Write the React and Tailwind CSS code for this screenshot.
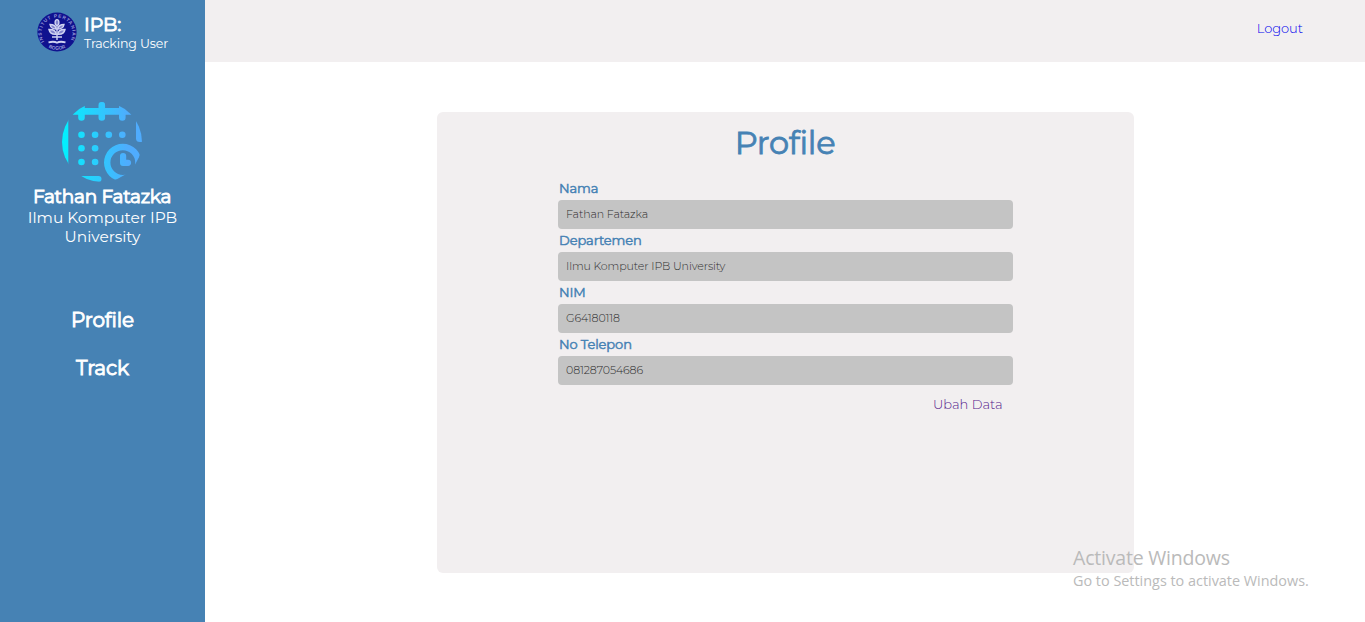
import React from "react";

const fields = [
  { label: "Nama", value: "Fathan Fatazka" },
  { label: "Departemen", value: "Ilmu Komputer IPB University" },
  { label: "NIM", value: "G64180118" },
  { label: "No Telepon", value: "081287054686" },
];

function Logo() {
  return (
    <svg viewBox="0 0 40 40" className="h-10 w-10 shrink-0">
      <defs>
        <path id="ringTop" d="M7.2 29.500 A15.400 15.400 0 1 1 32.800 29.500" />
        <path id="ringBottom" d="M8 33.200 A18.200 18.200 0 0 0 32 33.200" />
      </defs>
      <circle cx="20" cy="20" r="19.600" fill="#10128f" />
      <g fill="#9a9dda" fontFamily="Liberation Sans, sans-serif" fontWeight="700" fontSize="4.700">
        <text><textPath href="#ringTop" textLength="64">INSTITUT PERTANIAN</textPath></text>
        <text><textPath href="#ringBottom" startOffset="50%" textAnchor="middle">BOGOR</textPath></text>
      </g>
      <g fill="none" stroke="#d0d3f2" strokeWidth="1.400">
        <ellipse cx="20" cy="10.500" rx="1.900" ry="2.900" fill="#8083cc" />
        <path d="M13 12.500c3.500 0 5.700 1.300 6.200 4.500-3.500 0-5.700-1.500-6.200-4.500z" fill="#8083cc" />
        <path d="M27 12.500c-3.500 0-5.700 1.300-6.200 4.500 3.500 0 5.700-1.500 6.200-4.500z" fill="#8083cc" />
        <path d="M12 17.500c4-.2 6.700 1.300 7.200 4.700-4 .3-6.500-1.300-7.200-4.700z" fill="#8083cc" />
        <path d="M28 17.500c-4-.2-6.700 1.300-7.200 4.700 4 .3 6.500-1.300 7.200-4.700z" fill="#8083cc" />
        <path d="M20 13v15M15 25h10" />
        <path d="M11.500 30.300c3.500-.8 6.500-.8 8.500.4 2-1.200 5-1.200 8.500-.4" strokeWidth="1.800" />
      </g>
    </svg>
  );
}

function Avatar() {
  return (
    <svg viewBox="10 10 80 80" className="h-20 w-20">
      <defs>
        <linearGradient id="avatarFill" gradientUnits="userSpaceOnUse" x1="10" y1="50" x2="76" y2="50">
          <stop offset="0" stopColor="#00f2fe" />
          <stop offset="1" stopColor="#4facfe" />
        </linearGradient>
        <clipPath id="avatarClip"><circle cx="50" cy="50" r="40" /></clipPath>
      </defs>
      <g clipPath="url(#avatarClip)" fill="url(#avatarFill)">
        <path d="M5 20h11.300v60H5zM15 16h70v6.800H15zM26.200 10h6.600v15.500a3.300 3.300 0 0 1-6.600 0zM46.500 13a3.300 3.300 0 0 1 6.600 0v12.500a3.300 3.300 0 0 1-6.600 0zM67 10h6.600v15.500a3.300 3.300 0 0 1-6.600 0zM84 20h8v26.500a4 3.500 0 0 1-8 0zM15 84h31.500a3 3 0 0 1 0 6H15z" />
        <circle cx="29.500" cy="42.700" r="3.300" />
        <circle cx="43.100" cy="42.700" r="3.300" />
        <circle cx="56.800" cy="42.700" r="3.300" />
        <circle cx="70.300" cy="42.700" r="3.300" />
        <circle cx="29.500" cy="56.300" r="3.300" />
        <circle cx="43.100" cy="56.300" r="3.300" />
        <circle cx="29.500" cy="70" r="3.300" />
        <circle cx="43.100" cy="70" r="3.300" />
        <path d="M68 64a3 3 0 0 1 6.200 0v3.700h1.800a3.100 3.100 0 0 1 0 6.200h-5a3 3 0 0 1-3-3z" />
        <path fillRule="evenodd" d="M70.800 51.800a18.800 18.800 0 1 1 0 37.600a18.800 18.800 0 1 1 0-37.600zM70.800 58.200a12.400 12.400 0 1 0 0 24.800a12.400 12.400 0 1 0 0-24.800z" />
      </g>
    </svg>
  );
}

export default function App() {
  return (
    <div className="relative flex h-[622px] w-full overflow-hidden bg-white font-['Montserrat','Inter',sans-serif] text-[13px] leading-4">
      <aside className="flex w-[205px] shrink-0 flex-col items-center bg-[#4682b4] text-white">
        <div className="flex w-full gap-[7px] pt-3 pl-[37px]">
          <Logo />
          <div className="whitespace-nowrap pt-0.5">
            <h2 className="text-[19px] leading-[22px] tracking-[-0.1px] [-webkit-text-stroke:0.9px_currentColor]">IPB:</h2>
            <p className="text-[12.6px] leading-[15px] tracking-[-0.16px]">Tracking User</p>
          </div>
        </div>
        <div className="mt-[50px] flex flex-col items-center text-center">
          <div className="pr-px"><Avatar /></div>
          <h3 className="pt-1 pr-px text-[18.5px] leading-[22px] tracking-[-0.28px] [-webkit-text-stroke:0.9px_currentColor]">Fathan Fatazka</h3>
          <p className="w-[170px] text-[15.4px] leading-[19px]">Ilmu Komputer IPB University</p>
        </div>
        <nav className="mt-[62px] flex flex-col items-center gap-6 text-[20px] leading-6 tracking-[-0.1px] [-webkit-text-stroke:0.9px_currentColor]">
          <a href="#profile">Profile</a>
          <a href="#track">Track</a>
        </nav>
      </aside>
      <div className="flex min-w-0 flex-1 flex-col">
        <header className="flex h-[62px] justify-end bg-[#f2eff0] pt-5 pr-[62px] text-[#0000ee]">
          <a href="#logout" className="font-light">Logout</a>
        </header>
        <main className="flex justify-center pt-[50px]">
          <section className="flex h-[461px] w-[697px] flex-col items-center rounded-md bg-[#f2eff0]">
            <h1 className="pt-[11px] text-[32px] leading-10 tracking-[-0.2px] text-[#4682b4] [-webkit-text-stroke:0.8px_currentColor]">Profile</h1>
            <div className="mt-[17px] w-[455px]">
              {fields.map((f) => (
                <div key={f.label} className="h-[52px]">
                  <div className="h-5 pl-[1.5px] leading-4 tracking-[-0.1px] text-[#4682b4] [-webkit-text-stroke:0.5px_currentColor]">{f.label}</div>
                  <div className="flex h-[29px] items-center rounded bg-[#c4c4c4] pb-0.5 pl-[8.5px] text-[11px] font-light tracking-[-0.1px] text-[#303030]">{f.value}</div>
                </div>
              ))}
              <div className="flex justify-end pt-2 pr-2.5 text-[#551a8b]">
                <a href="#edit" className="font-light">Ubah Data</a>
              </div>
            </div>
          </section>
        </main>
      </div>
      <div className="absolute top-[545px] left-[1073px] whitespace-nowrap font-['Segoe_UI','Open_Sans',sans-serif] text-[#bababa]">
        <p className="text-[19.5px] leading-[26px] tracking-[-0.2px]">Activate Windows</p>
        <p className="text-[14.4px] leading-5">Go to Settings to activate Windows.</p>
      </div>
    </div>
  );
}
